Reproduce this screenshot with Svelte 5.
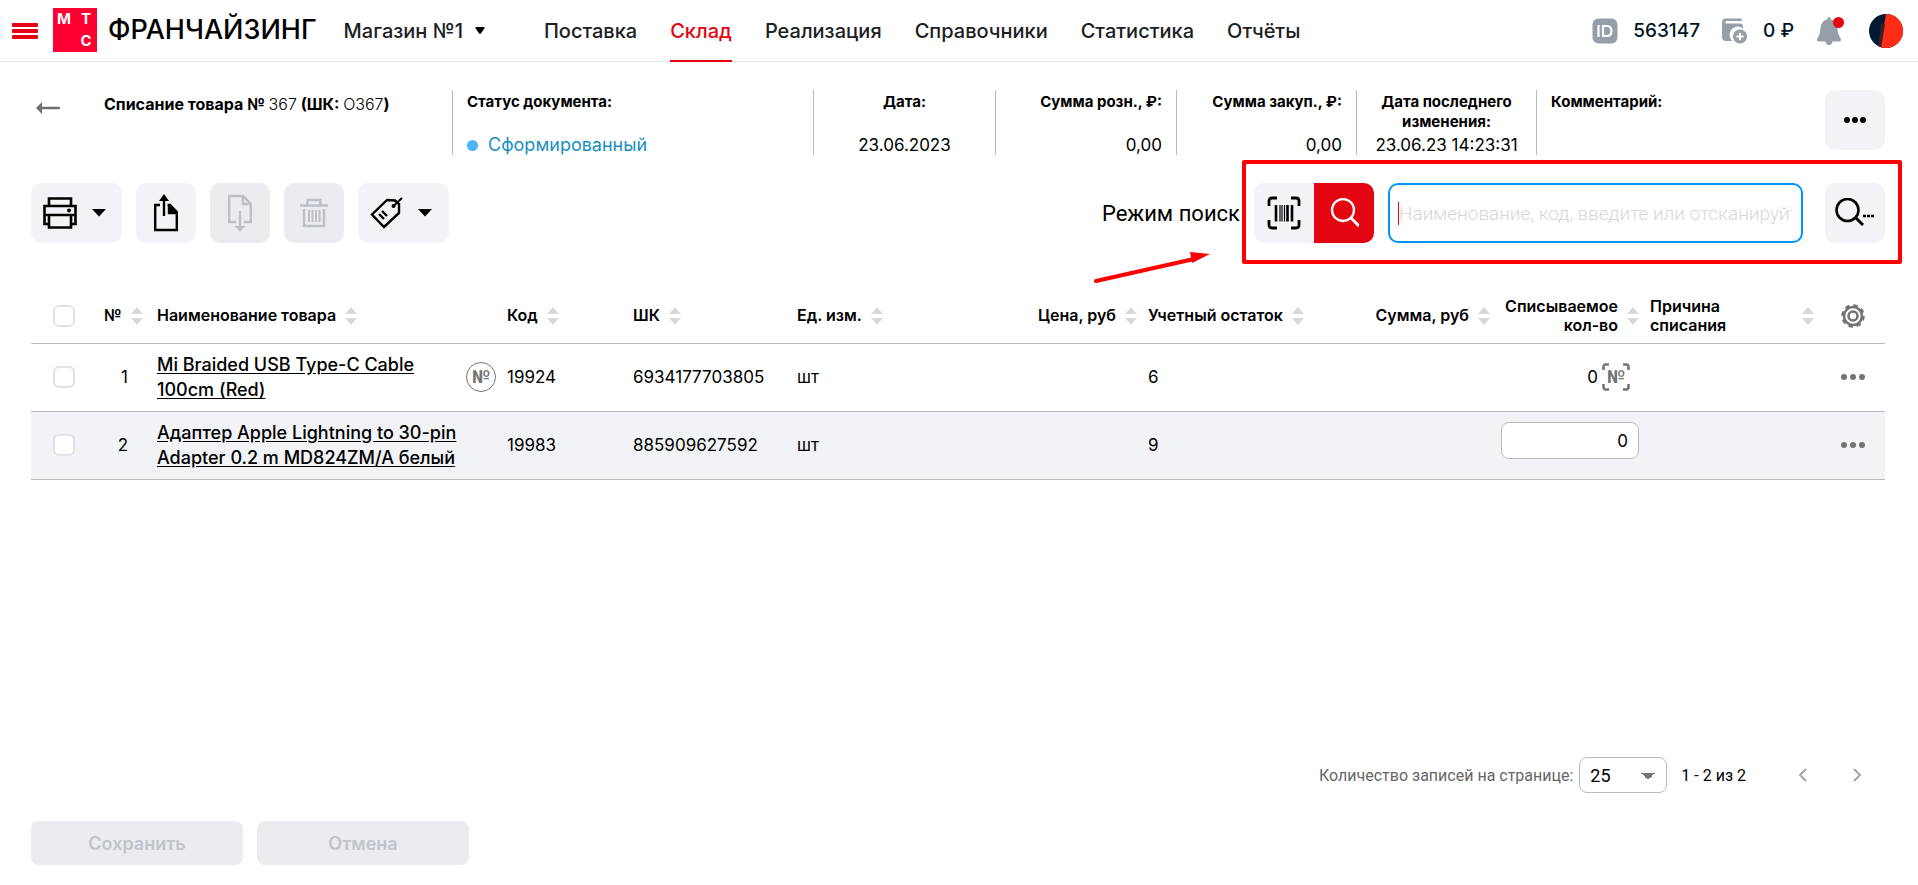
<script>
  import { onMount } from "svelte";

  const nav = [
    "Поставка",
    "Склад",
    "Реализация",
    "Справочники",
    "Статистика",
    "Отчёты",
  ];
  let activeNav = "Склад";

  const columns = [
    { title: "№", width: 53 },
    { title: "Наименование товара", width: 350 },
    { title: "Код", width: 126 },
    { title: "ШК", width: 164 },
    { title: "Ед. изм.", width: 163 },
    { title: "Цена, руб", width: 188, right: true },
    { title: "Учетный остаток", width: 172 },
    { title: "Сумма, руб", width: 181, right: true },
    { title: "Списываемое кол-во", width: 149, right: true },
    { title: "Причина списания", width: 172, wide: true },
  ];

  let rows = [
    {
      name: "Mi Braided USB Type-C Cable 100cm (Red)",
      serial: true,
      code: "19924",
      barcode: "6934177703805",
      unit: "шт",
      rest: 6,
      count: "0",
      checked: false,
    },
    {
      name: "Адаптер Apple Lightning to 30-pin Adapter 0.2 m MD824ZM/A белый",
      serial: false,
      code: "19983",
      barcode: "885909627592",
      unit: "шт",
      rest: 9,
      count: "0",
      checked: false,
    },
  ];

  let query = "";
  let perPage = "25";
  let searchInput;

  $: allChecked = rows.every((row) => row.checked);

  const toggleAll = () => {
    const value = !allChecked;
    rows = rows.map((row) => ({ ...row, checked: value }));
  };

  onMount(() => searchInput.focus());
</script>

<div class="page">
  <header class="topbar">
    <button class="plain burger" aria-label="Меню"
      ><span></span><span></span><span></span></button
    >
    <a class="brand" href="#home">
      <span class="logo"><b>М</b><b>Т</b><b class="last">С</b></span>
      <span class="brand-name">ФРАНЧАЙЗИНГ</span>
    </a>
    <button class="plain store">
      Магазин №1
      <svg width="10" height="7" viewBox="0 0 10 7"
        ><path d="M1 0h8q1 .6.4 1.500L6 6.200q-1 1-2 0L.6 1.500Q0 .6 1 0z" /></svg
      >
    </button>
    <nav>
      {#each nav as item}
        <a
          href="#{item}"
          class:active={item === activeNav}
          on:click={() => (activeNav = item)}>{item}</a
        >
      {/each}
    </nav>
    <div class="account">
      <svg width="26" height="26" viewBox="0 0 26 26">
        <rect x="0.500" y="0.500" width="25" height="25" rx="6" fill="#969fa8" />
        <path
          d="M6.500 7v12M11 8h3.500q5 0 5 5t-5 5H11z"
          fill="none"
          stroke="#fff"
          stroke-width="2.200"
        />
      </svg>
      <span class="id">563147</span>
      <svg width="26" height="26" viewBox="0 0 26 26" fill="#969fa8">
        <path
          d="M4 0.500h15a1.300 1.300 0 0 1 0 2.500H4.500a1.200 1.200 0 0 0 0 2.400H18q3 0 3 3v2a8 8 0 0 0-10.500 12.600H4q-4 0-4-4V4.500q0-4 4-4z"
        />
        <path
          d="M18 11.500a7 7 0 1 0 .01 0zM17 15h2v2.600h2.600v2H19v2.600h-2v-2.600h-2.600v-2H17z"
          fill-rule="evenodd"
        />
      </svg>
      <span class="money">0 ₽</span>
      <button class="plain bell" aria-label="Уведомления">
        <svg width="28" height="30" viewBox="0 0 28 30">
          <path
            d="M12 1q2 0 2 2.500 6 1.500 6.500 8.500.3 6 2 8.500 1.500 1.500 1.500 3.500 0 1.500-2 1.500h-6.500q-.5 3.500-3.500 3.500t-3.500-3.500H2q-2 0-2-1.500 0-2 1.500-3.500 1.700-2.500 2-8.500Q4 5 10 3.500 10 1 12 1z"
            fill="#969fa8"
          />
          <circle cx="21.500" cy="6.500" r="5.500" fill="#e30611" />
        </svg>
      </button>
      <button class="plain" aria-label="Профиль">
        <svg width="34" height="34" viewBox="0 0 34 34">
          <defs><clipPath id="face"><circle cx="17" cy="17" r="17" /></clipPath></defs>
          <g clip-path="url(#face)">
            <rect width="34" height="34" fill="#001a34" />
            <path d="M17 0h17v34H11z" fill="#ff2d16" />
            <path d="M12 10h4l-4 24H9z" fill="#38202e" />
            <path d="M31 34q2-9 3-12v12z" fill="#001a34" />
          </g>
        </svg>
      </button>
    </div>
  </header>

  <main>
    <section class="doc">
      <div class="doc-title">
        <a class="back" href="#back" aria-label="Назад">
          <svg width="24" height="14" viewBox="0 0 24 14"
            ><path d="M0 7l6-6v4.700h17q1 0 1 1.300t-1 1.300H6V13z" fill="#6f6f6f" /></svg
          >
        </a>
        <h1>Списание товара № <span>367</span> (ШК: <span>О367</span>)</h1>
      </div>
      <div class="field">
        <b>Статус документа:</b>
        <span class="status">Сформированный</span>
      </div>
      <div class="field center"><b>Дата:</b><span>23.06.2023</span></div>
      <div class="field right"><b>Сумма розн., ₽:</b><span>0,00</span></div>
      <div class="field right"><b>Сумма закуп., ₽:</b><span>0,00</span></div>
      <div class="field center">
        <b>Дата последнего изменения:</b><span>23.06.23 14:23:31</span>
      </div>
      <div class="field"><b>Комментарий:</b></div>
      <button class="tool" aria-label="Ещё">
        <svg width="24" height="6" viewBox="0 0 24 6">
          <circle cx="4" cy="3" r="3" /><circle cx="12" cy="3" r="3" /><circle
            cx="20"
            cy="3"
            r="3"
          />
        </svg>
      </button>
    </section>

    <section class="toolbar">
      <button class="tool split" aria-label="Печать">
        <svg width="34" height="32" viewBox="0 0 34 32" fill="none" stroke="#000" stroke-width="2.600">
          <path d="M6 9V1.500h22V9M6 27H1.500V9h31v18H28M1.500 18h31" />
          <path d="M6 18v12.500h22V18" />
          <circle cx="26" cy="13.500" r="2" fill="#000" stroke="none" />
        </svg>
        <svg width="14" height="8" viewBox="0 0 14 8"><path d="M0 0h14L7 7.500z" /></svg>
      </button>
      <button class="tool" aria-label="Выгрузить">
        <svg width="24" height="38" viewBox="0 0 24 38" fill="none" stroke="#000" stroke-width="2.400">
          <path d="M6 11H1.200v25h21.600V18L16 11h-2.500M15 11v8h7.500" />
          <path d="M10 22V5" />
          <path d="M10 0l5 7H5z" fill="#000" stroke="none" />
          <path d="M15 11l8 8h-8z" fill="#000" stroke="none" />
        </svg>
      </button>
      <button class="tool" disabled aria-label="Загрузить">
        <svg width="24" height="38" viewBox="0 0 24 38" fill="none" stroke="#bbc1c7" stroke-width="2.400">
          <path d="M8 28H1.200V2H15l7.800 8v18H16M15 2v8h8" />
          <path d="M12 17v16" />
          <path d="M6.500 32h11L12 38z" fill="#bbc1c7" stroke="none" />
        </svg>
      </button>
      <button class="tool" disabled aria-label="Удалить">
        <svg width="28" height="30" viewBox="0 0 28 30" fill="none" stroke="#bbc1c7" stroke-width="2.400">
          <path d="M0 7.500h28M7.500 7V2h13v5M4 11v17h20V11" />
          <path d="M9 12v12M12.500 12v12M16 12v12M19.500 12v12" stroke-width="2" />
        </svg>
      </button>
      <button class="tool split" aria-label="Ценники">
        <svg width="33" height="32" viewBox="0 0 33 32" fill="none" stroke="#000" stroke-width="2.400">
          <path d="M17 3l-15 14.500L14 30l15-14V7l-4-3.500z" />
          <path d="M32 1l-9 8.500" stroke-width="2" />
          <path d="M9 17l5 5M12 14l5 5" stroke-width="2.400" />
          <circle cx="23.500" cy="9" r="2" fill="#000" stroke="none" />
        </svg>
        <svg width="14" height="8" viewBox="0 0 14 8"><path d="M0 0h14L7 7.500z" /></svg>
      </button>

      <div class="search">
        <span class="mode-label">Режим поиск</span>
        <div class="controls">
          <div class="mode">
            <button aria-label="Сканирование">
              <svg width="34" height="34" viewBox="0 0 34 34" fill="none" stroke="#000">
                <path
                  d="M2 10V5q0-3 3-3h5M24 2h5q3 0 3 3v5M32 24v5q0 3-3 3h-5M10 32H5q-3 0-3-3v-5"
                  stroke-width="2.800"
                />
                <path d="M9 9v16.500M20.500 9v16.500M25 9v16.500" stroke-width="2.600" />
                <path d="M13 9v16.500M15 9v16.500M17.500 9v16.500" stroke-width="1.200" />
              </svg>
            </button>
            <button class="on" aria-label="Поиск">
              <svg width="30" height="30" viewBox="0 0 30 30" fill="none" stroke="#fff" stroke-width="2.300">
                <circle cx="14" cy="12" r="11" />
                <path d="M22 20l8 8" stroke-width="2.800" />
              </svg>
            </button>
          </div>
          <input
            class="query"
            type="text"
            aria-label="Поиск товара"
            placeholder="Наименование, код, введите или отсканируйте"
            bind:value={query}
            bind:this={searchInput}
          />
          <button class="tool" aria-label="Расширенный поиск">
            <svg width="40" height="30" viewBox="0 0 40 30" fill="none" stroke="#000" stroke-width="2.600">
              <circle cx="12.500" cy="12" r="11" />
              <path d="M20 19l8 8" stroke-width="3" />
              <path d="M28 18h3M32 18h3M36 18h3" />
            </svg>
          </button>
          <div class="frame"></div>
          <svg class="pointer" width="120" height="34" viewBox="0 0 120 34">
            <path d="M4 31L102 9" stroke="#f00" stroke-width="4" stroke-linecap="round" />
            <path d="M98 2l20 2-18 9z" fill="#f00" />
          </svg>
        </div>
      </div>
    </section>

    <table>
      <colgroup>
        <col style:width="73px" />
        {#each columns as column}
          <col style:width="{column.width}px" />
        {/each}
        <col style:width="63px" />
      </colgroup>
      <thead>
        <tr>
          <th class="check">
            <input
              type="checkbox"
              aria-label="Выбрать все"
              checked={allChecked}
              on:change={toggleAll}
            />
          </th>
          {#each columns as column}
            <th>
              <button class="plain sort" class:right={column.right} class:wide={column.wide}>
                <span>{column.title}</span>
                <svg width="12" height="18" viewBox="0 0 12 18"
                  ><path d="M6 0l6 7H0zM6 18l6-7H0z" fill="#d8d8d8" /></svg
                >
              </button>
            </th>
          {/each}
          <th class="actions">
            <button class="plain" aria-label="Настройки">
              <svg width="24" height="24" viewBox="0 0 24 24" fill="none" stroke="#747474">
                <circle cx="12" cy="12" r="9" stroke-width="2.600" />
                <circle cx="12" cy="12" r="10.500" stroke-width="2.600" stroke-dasharray="4.400 3.850" />
                <circle cx="12" cy="12" r="4.500" stroke-width="2.600" />
              </svg>
            </button>
          </th>
        </tr>
      </thead>
      <tbody>
        {#each rows as row, i}
          <tr>
            <td class="check">
              <input
                type="checkbox"
                aria-label="Выбрать {row.name}"
                bind:checked={row.checked}
              />
            </td>
            <td class="num">{i + 1}</td>
            <td>
              <div class="name">
                <a href="#{row.code}">{row.name}</a>
                {#if row.serial}
                  <span class="serial">№</span>
                {/if}
              </div>
            </td>
            <td>{row.code}</td>
            <td>{row.barcode}</td>
            <td>{row.unit}</td>
            <td></td>
            <td>{row.rest}</td>
            <td></td>
            <td class="count">
              {#if row.serial}
                <div class="scan">
                  {row.count}
                  <button class="plain" aria-label="Серийные номера">
                    <svg width="28" height="28" viewBox="0 0 28 28" fill="none" stroke="#747474" stroke-width="2.600">
                      <path
                        d="M1.500 7V4q0-2.500 2.500-2.500h3M21 1.500h3q2.500 0 2.500 2.500v3M26.500 21v3q0 2.500-2.500 2.500h-3M7 26.500H4q-2.500 0-2.500-2.500v-3"
                      />
                    </svg>
                    <span>№</span>
                  </button>
                </div>
              {:else}
                <input type="text" aria-label="Списываемое кол-во" bind:value={row.count} />
              {/if}
            </td>
            <td></td>
            <td class="actions">
              <button class="plain" aria-label="Действия">
                <svg width="24" height="6" viewBox="0 0 24 6" fill="#747474">
                  <circle cx="3" cy="3" r="3" /><circle cx="12" cy="3" r="3" /><circle
                    cx="21"
                    cy="3"
                    r="3"
                  />
                </svg>
              </button>
            </td>
          </tr>
        {/each}
      </tbody>
    </table>

    <div class="pager">
      <label for="per-page">Количество записей на странице:</label>
      <select id="per-page" bind:value={perPage}>
        <option>25</option>
        <option>50</option>
        <option>100</option>
      </select>
      <span class="range">1 - 2 из 2</span>
      <button class="plain" aria-label="Предыдущая страница">
        <svg width="10" height="14" viewBox="0 0 10 14"
          ><path d="M8 1L2 7l6 6" fill="none" stroke="#a6a6a6" stroke-width="2" /></svg
        >
      </button>
      <button class="plain" aria-label="Следующая страница">
        <svg width="10" height="14" viewBox="0 0 10 14"
          ><path d="M2 1l6 6-6 6" fill="none" stroke="#a6a6a6" stroke-width="2" /></svg
        >
      </button>
    </div>

    <footer>
      <button disabled>Сохранить</button>
      <button disabled>Отмена</button>
    </footer>
  </main>
</div>

<style>
  :global(body) {
    background: #fff;
    color: #000;
    font-family: Inter, "Liberation Sans", sans-serif;
    font-size: 17px;
  }

  .page {
    min-height: 100vh;
    display: flex;
    flex-direction: column;
  }

  .page * {
    box-sizing: border-box;
  }

  svg {
    display: block;
    flex: none;
  }

  button {
    font: inherit;
    color: inherit;
    border: none;
    cursor: pointer;
  }

  .plain {
    background: none;
    padding: 0;
  }

  .topbar {
    height: 62px;
    display: flex;
    align-items: center;
    padding: 0 15px 0 12px;
    border-bottom: 1px solid #e2e3e5;
    color: #1d2023;
    font-size: 20px;
    font-weight: 500;
    white-space: nowrap;
  }

  .burger {
    width: 26px;
    display: grid;
    gap: 2px;
  }

  .burger span {
    height: 4px;
    border-radius: 1px;
    background: #e30611;
  }

  .brand {
    display: flex;
    align-items: center;
    gap: 11px;
    margin: 0 27px 0 15px;
    padding-bottom: 2px;
    color: #000;
    text-decoration: none;
  }

  .logo {
    width: 44px;
    height: 44px;
    display: grid;
    grid-template-columns: 1fr 1fr;
    justify-items: center;
    align-items: center;
    background: #ff0032;
    color: #fff;
    font-size: 15px;
    line-height: 18px;
  }

  .logo .last {
    grid-column: 2;
  }

  .brand-name {
    font-size: 27px;
  }

  .store {
    display: flex;
    align-items: center;
    gap: 12px;
  }

  nav {
    display: flex;
    align-self: stretch;
    gap: 33px;
    margin-left: 59px;
  }

  nav a {
    display: flex;
    align-items: center;
    margin-bottom: -1px;
    border-top: 2px solid transparent;
    border-bottom: 2px solid transparent;
    color: inherit;
    text-decoration: none;
  }

  nav a.active {
    color: #e30611;
    border-bottom-color: #e30611;
  }

  .account {
    display: flex;
    align-items: center;
    margin-left: auto;
    color: #001424;
    font-size: 19px;
  }

  .id {
    margin: 0 22px 0 15px;
  }

  .money {
    margin: 0 23px 0 15px;
  }

  .bell {
    margin-right: 24px;
  }

  main {
    flex: 1;
    display: flex;
    flex-direction: column;
    padding: 28px 33px 20px 31px;
  }

  .doc {
    display: grid;
    grid-template-columns: 421fr 361fr 182fr 181fr 180fr 180fr 289fr 60px;
    min-height: 65px;
  }

  .doc-title {
    display: flex;
    padding-top: 4px;
  }

  .back {
    width: 73px;
    padding: 7px 0 0 5px;
  }

  h1 {
    margin: 0;
    font-size: 16px;
    line-height: 20px;
    font-weight: 700;
  }

  h1 span {
    font-weight: 300;
  }

  .field {
    display: flex;
    flex-direction: column;
    justify-content: space-between;
    padding: 2px 14px 0;
    border-left: 1px solid #bcbcbc;
    line-height: 20px;
  }

  .field b {
    font-size: 15px;
  }

  .field.center {
    text-align: center;
  }

  .field.right {
    text-align: right;
  }

  .status {
    display: flex;
    align-items: center;
    gap: 10px;
    color: #1a8fbf;
    font-size: 18px;
  }

  .status::before {
    content: "";
    width: 11px;
    height: 11px;
    border-radius: 50%;
    background: #49b6ff;
  }

  .tool {
    width: 60px;
    height: 60px;
    flex: none;
    display: flex;
    align-items: center;
    justify-content: center;
    padding: 0;
    border-radius: 10px;
    background: #f2f3f7;
  }

  .tool:disabled {
    background: #ebecf0;
  }

  .tool.split {
    width: 91px;
    gap: 15px;
    padding-right: 5px;
  }

  .toolbar {
    display: flex;
    gap: 14px;
    margin-top: 28px;
  }

  .search {
    flex: 1;
    display: flex;
    justify-content: flex-end;
    align-items: center;
    gap: 14px;
  }

  .mode-label {
    font-family: Roboto, "Liberation Sans", sans-serif;
    font-size: 22px;
    white-space: nowrap;
  }

  .controls {
    position: relative;
    display: flex;
  }

  .mode {
    display: flex;
    border-radius: 10px;
    overflow: hidden;
  }

  .mode button {
    width: 60px;
    height: 60px;
    display: flex;
    align-items: center;
    justify-content: center;
    padding: 0;
    background: #f2f3f7;
  }

  .mode .on {
    background: #e30611;
  }

  .query {
    width: 415px;
    height: 60px;
    margin: 0 22px 0 14px;
    padding: 0 9px;
    border: 2px solid #0095ff;
    border-radius: 10px;
    outline: none;
    caret-color: #e30611;
    font: 300 19px Roboto, "Liberation Sans", sans-serif;
  }

  .query:placeholder-shown:focus {
    background: linear-gradient(#e30611, #e30611) 8px 50% / 1px 23px no-repeat;
  }

  .query::placeholder {
    color: #d6d6d6;
  }

  .frame {
    position: absolute;
    inset: -23px -17px -21px -12px;
    border: 4px solid #f00;
    border-radius: 2px;
    pointer-events: none;
  }

  .pointer {
    position: absolute;
    left: -162px;
    top: 67px;
    pointer-events: none;
  }

  table {
    width: 100%;
    margin-top: 46px;
    table-layout: fixed;
    border-collapse: collapse;
  }

  tr {
    border-bottom: 1px solid #bcbcbc;
  }

  tbody tr:nth-child(even) {
    background: #f2f3f7;
  }

  th,
  td {
    padding: 0;
    text-align: left;
    font-weight: 400;
  }

  thead tr {
    height: 54px;
  }

  tbody tr {
    height: 68px;
  }

  .check {
    padding-left: 22px;
  }

  input[type="checkbox"] {
    appearance: none;
    display: block;
    width: 22px;
    height: 22px;
    margin: 0;
    border: 2px solid #dfe2ea;
    border-radius: 6px;
    background: #fff;
  }

  input[type="checkbox"]:checked {
    background: #e30611;
  }

  .sort {
    width: 100%;
    display: flex;
    align-items: center;
    gap: 9px;
    font-size: 16px;
    line-height: 19px;
    font-weight: 600;
    text-align: left;
  }

  .sort.right {
    justify-content: flex-end;
    padding-right: 11px;
    text-align: right;
  }

  .sort.wide {
    justify-content: space-between;
    padding-right: 8px;
  }

  .sort.wide span {
    width: 100px;
  }

  .num {
    padding-right: 29px;
    text-align: right;
  }

  .name {
    display: flex;
    align-items: center;
    justify-content: space-between;
    padding-right: 11px;
    line-height: 25px;
  }

  .name a {
    max-width: 310px;
    color: #000;
    font-size: 18px;
    font-weight: 500;
    text-underline-offset: 2px;
  }

  .serial {
    width: 30px;
    height: 30px;
    flex: none;
    border: 1px solid #747474;
    border-radius: 50%;
    color: #747474;
    font: 700 18px/28px Roboto, "Liberation Sans", sans-serif;
    text-align: center;
  }

  .scan {
    display: flex;
    align-items: center;
    justify-content: flex-end;
    gap: 4px;
    padding-right: 20px;
  }

  .scan button {
    position: relative;
  }

  .scan span {
    position: absolute;
    inset: 0;
    color: #747474;
    font: 700 18px/28px Roboto, "Liberation Sans", sans-serif;
  }

  .count input {
    display: block;
    width: 138px;
    height: 37px;
    margin: 0 0 9px auto;
    padding: 0 10px;
    border: 1px solid #bcbcbc;
    border-radius: 8px;
    font: inherit;
    text-align: right;
  }

  .count:has(input) {
    padding-right: 12px;
  }

  .actions button {
    display: block;
    margin-left: 19px;
  }

  .pager {
    display: flex;
    align-items: center;
    margin-top: auto;
    padding-right: 23px;
    font: 16px Roboto, "Liberation Sans", sans-serif;
  }

  .pager label {
    margin-left: auto;
    color: #666;
  }

  .pager select {
    appearance: none;
    width: 88px;
    height: 36px;
    margin: 0 14px 0 6px;
    padding: 0 10px;
    border: 1px solid #bcbcbc;
    border-radius: 8px;
    background:
      linear-gradient(to bottom right, #747474 50%, transparent 50%) 68px 15px / 7px 7px no-repeat,
      linear-gradient(to bottom left, #747474 50%, transparent 50%) 61px 15px / 7px 7px no-repeat,
      #fff;
    font-size: 18px;
    font-family: inherit;
    color: #000;
  }

  .range {
    margin-right: 8px;
  }

  .pager button {
    width: 54px;
    height: 36px;
    display: flex;
    align-items: center;
    justify-content: flex-end;
  }

  footer {
    display: flex;
    gap: 14px;
    margin-top: 28px;
  }

  footer button {
    width: 212px;
    height: 44px;
    border-radius: 8px;
    background: #ebecf0;
    color: #bfc5cb;
    font-size: 18px;
    font-weight: 600;
  }
</style>
